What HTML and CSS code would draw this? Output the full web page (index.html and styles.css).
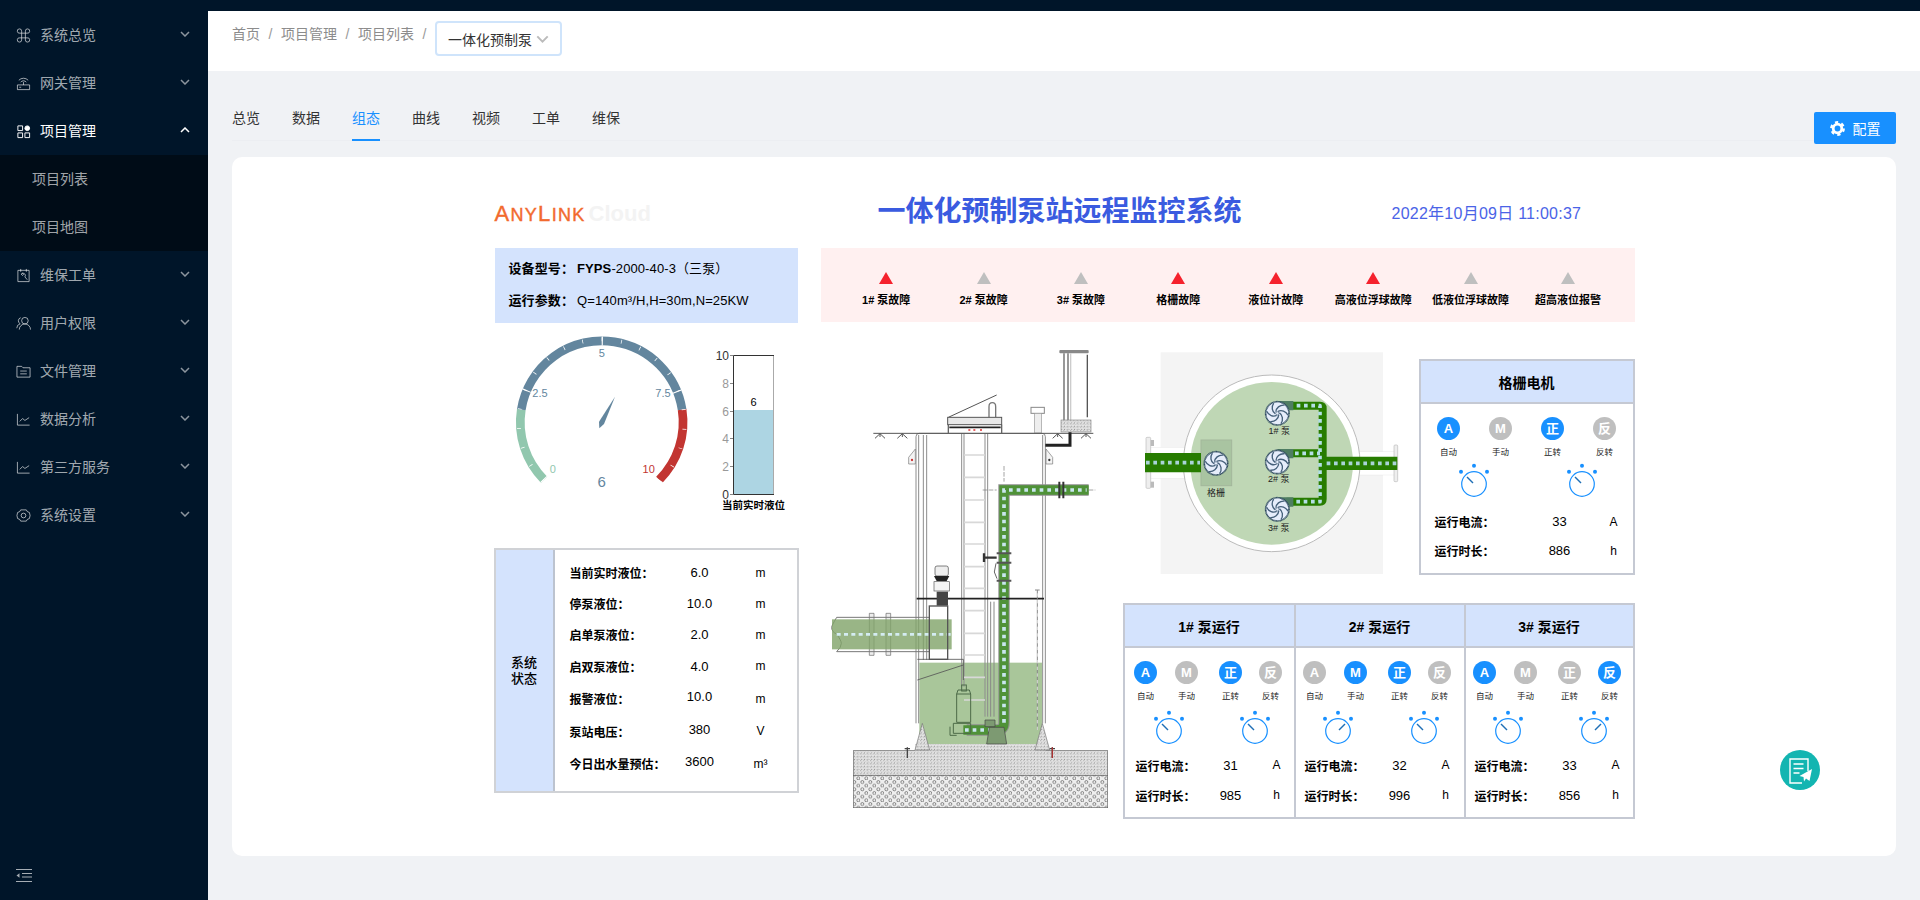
FILE: index.html
```html
<!DOCTYPE html>
<html lang="zh-CN">
<head>
<meta charset="utf-8">
<title>一体化预制泵站远程监控系统</title>
<link rel="stylesheet" href="styles.css">
</head>
<body>
<svg class="defs" width="0" height="0" aria-hidden="true">
  <defs>
    <symbol id="chev" viewBox="0 0 10 6"><path d="M1 1l4 4 4-4" fill="none" stroke="currentColor" stroke-width="1.5"/></symbol>
    <g id="dots">
      <circle cx="-13" cy="-12.3" r="2" fill="#1890ff"/><circle cx="0" cy="-18.3" r="2" fill="#1890ff"/><circle cx="13" cy="-12.3" r="2" fill="#1890ff"/>
      <circle r="12.3" fill="none" stroke="#1890ff" stroke-width="1.2"/>
    </g>
    <symbol id="dial-l" viewBox="-16 -21 32 36"><use href="#dots"/><path d="M-1 -1L-7 -7" stroke="#1f6fb5" stroke-width="1.4"/></symbol>
    <symbol id="dial-r" viewBox="-16 -21 32 36"><use href="#dots"/><path d="M1 -1L7 -7" stroke="#1f6fb5" stroke-width="1.4"/></symbol>
    <g id="fan">
      <circle r="35" fill="#e6edfb" stroke="#2f4a60" stroke-width="5" stroke-dasharray="3 1"/>
      <g fill="none" stroke="#45607a" stroke-width="4">
        <path id="blade" d="M2 -6C12 -11 26 -7 32 6"/>
        <use href="#blade" transform="rotate(60)"/><use href="#blade" transform="rotate(120)"/><use href="#blade" transform="rotate(180)"/><use href="#blade" transform="rotate(240)"/><use href="#blade" transform="rotate(300)"/>
      </g>
      <circle r="5" fill="#e6edfb" stroke="#45607a" stroke-width="2"/>
    </g>
    <pattern id="speck" width="10" height="10" patternUnits="userSpaceOnUse">
      <rect width="10" height="10" fill="#e6e6e6"/>
      <circle cx="2" cy="2" r="1.3" fill="#6a6a6a"/><circle cx="7" cy="4" r="1.100" fill="#888"/><circle cx="4" cy="8" r="1.300" fill="#5a5a5a"/><circle cx="9" cy="9" r=".9" fill="#777"/>
    </pattern>
    <pattern id="rings" width="24" height="22" patternUnits="userSpaceOnUse">
      <rect width="24" height="22" fill="#eee"/>
      <circle cx="7" cy="6" r="4.500" fill="none" stroke="#555" stroke-width="2"/><circle cx="19" cy="17" r="4.500" fill="none" stroke="#555" stroke-width="2"/>
    </pattern>
  </defs>
</svg>

<div class="topstrip"></div>
<div class="app">
  <aside class="side">
    <nav class="menu">
      <a class="mi"><svg class="ic" viewBox="0 0 16 16"><path d="M6 5.500H4.200A2.300 2.300 0 1 1 6 3.300zM10 5.500h1.800A2.300 2.300 0 1 0 10 3.300zM6 10.500H4.200A2.300 2.300 0 1 0 6 12.700zM10 10.500h1.800A2.300 2.300 0 1 1 10 12.700zM6 5.500h4v5H6z"/></svg><span>系统总览</span><svg class="ch"><use href="#chev"/></svg></a>
      <a class="mi"><svg class="ic" viewBox="0 0 16 16"><path d="M1.500 9.500h13v5h-13zM3.500 12h2M5 6.500a4 4 0 0 1 6 0M3 4.500a7 7 0 0 1 10 0M8 6.500v3"/></svg><span>网关管理</span><svg class="ch"><use href="#chev"/></svg></a>
      <a class="mi on"><svg class="ic" viewBox="0 0 16 16"><path d="M2 2h5v5H2zM2 9.500h5v5H2zM9.500 9.500h5v5h-5z"/><circle cx="12" cy="4.500" r="2.500" fill="currentColor"/></svg><span>项目管理</span><svg class="ch up"><use href="#chev"/></svg></a>
      <div class="sub"><a class="si">项目列表</a><a class="si">项目地图</a></div>
      <a class="mi"><svg class="ic" viewBox="0 0 16 16"><path d="M2 2.500h12v12H2zM5 1v3M11 1v3M5.500 6.500a2.500 2.500 0 0 1 4 3l2.500 3M5.500 6.500l1.500 1.500 1-1-1.500-1.500"/></svg><span>维保工单</span><svg class="ch"><use href="#chev"/></svg></a>
      <a class="mi"><svg class="ic" viewBox="0 0 16 16"><circle cx="9.500" cy="5" r="3.500"/><path d="M3.500 14.500a6 6 0 0 1 12 0M5 1.800a3.500 3.500 0 0 0-.5 6.500A5 5 0 0 0 .8 13"/></svg><span>用户权限</span><svg class="ch"><use href="#chev"/></svg></a>
      <a class="mi"><svg class="ic" viewBox="0 0 16 16"><path d="M1 2.500h5l1.500 1.500H15v10H1zM4.500 7.500h7M4.500 10.500h7"/></svg><span>文件管理</span><svg class="ch"><use href="#chev"/></svg></a>
      <a class="mi"><svg class="ic" viewBox="0 0 16 16"><path d="M1.500 2v12h13M4 10l3-3 2.500 2L14 6"/></svg><span>数据分析</span><svg class="ch"><use href="#chev"/></svg></a>
      <a class="mi"><svg class="ic" viewBox="0 0 16 16"><path d="M1.500 2v12h13M4 10l3-3 2.500 2L14 6"/></svg><span>第三方服务</span><svg class="ch"><use href="#chev"/></svg></a>
      <a class="mi"><svg class="ic" viewBox="0 0 16 16"><path d="M5 2h6l1 1.800 2.300 1L15 8l-.7 3.200-2.300 1L11 14H5l-1-1.800-2.300-1L1 8l.7-3.200 2.300-1z" stroke-linejoin="round"/><circle cx="8" cy="8" r="2.500"/></svg><span>系统设置</span><svg class="ch"><use href="#chev"/></svg></a>
    </nav>
    <div class="collapse"><svg class="ic wide" viewBox="0 0 16 13"><path d="M0 .5h16M6 4.500h10M6 8h10M0 12.500h16"/><path d="M3.500 4.200v4.600L.5 6.500z" fill="currentColor" stroke="none"/></svg></div>
  </aside>

  <main class="main">
    <header class="head">
      <div class="crumbs"><span>首页</span><i>/</i><span>项目管理</span><i>/</i><span>项目列表</span><i>/</i></div>
      <div class="select"><span>一体化预制泵</span><svg class="ch sel"><use href="#chev"/></svg></div>
    </header>

    <div class="tabs">
      <a class="tab">总览</a><a class="tab">数据</a><a class="tab act">组态</a><a class="tab">曲线</a><a class="tab">视频</a><a class="tab">工单</a><a class="tab">维保</a>
      <button class="cfg"><svg class="gear" viewBox="0 0 14 14"><circle cx="7" cy="7" r="4" fill="none" stroke="#fff" stroke-width="2.600"/><circle cx="7" cy="7" r="5.800" fill="none" stroke="#fff" stroke-width="2.200" stroke-dasharray="3 3.070"/></svg><span>配置</span></button>
    </div>

    <section class="card">
      <div class="board">
        <div class="top">
          <div class="logo"><span class="any">A<small>NY</small>L<small>INK</small></span><span class="cloud">Cloud</span></div>
          <h1 class="title">一体化预制泵站远程监控系统</h1>
          <div class="date">2022年10月09日 11:00:37</div>
        </div>
        <div class="cols">
          <div class="left">
            <div class="device">
              <p><b>设备型号：</b><b>FYPS</b>-2000-40-3（三泵）</p>
              <p><b>运行参数：</b>Q=140m³/H,H=30m,N=25KW</p>
            </div>
            <div class="charts">
              <svg class="gauge" viewBox="0 0 200 190">
                <g fill="none" stroke-width="8.700" transform="rotate(135 106.700 99.300)">
                  <circle cx="106.700" cy="99.300" r="81.400" pathLength="360" stroke="#91c7ae" stroke-dasharray="54 306"/>
                  <circle cx="106.700" cy="99.300" r="81.400" pathLength="360" stroke="#63869e" stroke-dasharray="162 198" transform="rotate(54 106.700 99.300)"/>
                  <circle cx="106.700" cy="99.300" r="81.400" pathLength="360" stroke="#c23531" stroke-dasharray="54 306" transform="rotate(216 106.700 99.300)"/>
                  <circle cx="106.700" cy="99.300" r="83" pathLength="360" stroke="#fff" stroke-width="4" stroke-dasharray=".5 13"/>
                  <circle cx="106.700" cy="99.300" r="81.400" pathLength="360" stroke="#fff" stroke-width="9" stroke-dasharray=".8 66.700"/>
                </g>
                <polygon points="120,73.700 104,98.700 104.300,105.300 109,101" fill="#63869e"/>
                <g class="glab">
                  <text x="106.700" y="33.500">5</text><text x="45" y="74">2.5</text><text x="168" y="74">7.5</text>
                  <text x="57.700" y="150" class="g0">0</text><text x="153.700" y="150" class="g1">10</text>
                  <text x="106.700" y="164" class="gv">6</text>
                </g>
              </svg>
              <svg class="bar" viewBox="0 0 104 190">
                <rect x="39" y="87" width="39" height="84" fill="#add5e3"/>
                <path d="M78.500 32.500v139" stroke="#aaa" fill="none"/>
                <path d="M79 32.500H38.500V171.500M38.500 171.500H79" stroke="#333" fill="none"/>
                <path d="M35 32.500h3M35 60.500h3M35 88.500h3M35 115.500h3M35 143.500h3M35 171.500h3" stroke="#888"/>
                <g class="blab">
                  <text x="34" y="36.500">10</text><text x="34" y="64.500" class="dim">8</text><text x="34" y="92.500" class="dim">6</text><text x="34" y="119.500" class="dim">4</text><text x="34" y="147.500" class="dim">2</text><text x="34" y="175.500">0</text>
                </g>
                <text x="58.500" y="83" class="bval">6</text>
                <text x="58.500" y="186" class="btitle">当前实时液位</text>
              </svg>
            </div>
            <div class="status">
              <div class="st-head">系统<br>状态</div>
              <div class="st-body">
                <div class="st-row"><b>当前实时液位：</b><span class="v">6.0</span><span class="u">m</span></div>
                <div class="st-row"><b>停泵液位：</b><span class="v">10.0</span><span class="u">m</span></div>
                <div class="st-row"><b>启单泵液位：</b><span class="v">2.0</span><span class="u">m</span></div>
                <div class="st-row"><b>启双泵液位：</b><span class="v">4.0</span><span class="u">m</span></div>
                <div class="st-row"><b>报警液位：</b><span class="v">10.0</span><span class="u">m</span></div>
                <div class="st-row"><b>泵站电压：</b><span class="v">380</span><span class="u">V</span></div>
                <div class="st-row"><b>今日出水量预估：</b><span class="v">3600</span><span class="u">m³</span></div>
              </div>
            </div>
          </div>

          <div class="right">
            <div class="alarms">
              <div class="al"><i class="tri red"></i><span>1# 泵故障</span></div>
              <div class="al"><i class="tri"></i><span>2# 泵故障</span></div>
              <div class="al"><i class="tri"></i><span>3# 泵故障</span></div>
              <div class="al"><i class="tri red"></i><span>格栅故障</span></div>
              <div class="al"><i class="tri red"></i><span>液位计故障</span></div>
              <div class="al"><i class="tri red"></i><span>高液位浮球故障</span></div>
              <div class="al"><i class="tri"></i><span>低液位浮球故障</span></div>
              <div class="al"><i class="tri"></i><span>超高液位报警</span></div>
            </div>
            <div class="scene">
              <svg class="section" viewBox="3 0 906 1440">
                <!-- foundation -->
                <rect x="100" y="1232" width="763" height="74" fill="url(#speck)" stroke="#666" stroke-width="2"/>
                <rect x="100" y="1306" width="763" height="97" fill="url(#rings)" stroke="#666" stroke-width="2"/>
                <rect x="285" y="1212" width="392" height="20" fill="url(#speck)"/>
                <!-- water -->
                <rect x="298" y="968" width="368" height="244" fill="#a9c69a"/>
                <!-- tank -->
                <g fill="none" stroke="#8d8d8d" stroke-width="3">
                  <path d="M288 1150V290q0-10 10-10H666q10 0 10 10V1150"/>
                  <path d="M296 1150V285M668 1150V285"/>
                  <path d="M310 285V960M320 285V960M425 280V1040M432 280V1040M495 280V1130M503 280V1130"/>
                </g>
                <path d="M315 290V960" stroke="#fff" stroke-width="3" stroke-dasharray="6 16"/>
                <path d="M432 345h63M432 412h63M432 480h63M432 547h63M432 612h63M432 680h63M432 745h63M432 812h63M432 880h63M432 945h63M432 1012h63M432 1080h63" stroke="#d8d8d8" stroke-width="5"/>
                <path d="M285 1230l22-80 22 80zM645 1230l22-80 22 80z" fill="url(#speck)" stroke="#777" stroke-width="2"/>
                <!-- ground -->
                <path d="M160 280H820" stroke="#555" stroke-width="3"/>
                <path d="M165 295l15-14 15 14M180 281v10M232 295l15-14 15 14M247 281v10M698 295l15-14 15 14M713 281v10M783 295l15-14 15 14M798 281v10" fill="none" stroke="#555" stroke-width="3"/>
                <!-- lugs -->
                <path d="M266 372V352l20-25v45zM698 372V352l-20-25v45z" fill="#f4f4f4" stroke="#777" stroke-width="2"/>
                <circle cx="276" cy="360" r="3.500" fill="#c33"/><circle cx="688" cy="360" r="3.500" fill="#333"/>
                <!-- hatch -->
                <path d="M385 232L530 165" stroke="#555" stroke-width="3"/>
                <path d="M507 232V200q0-12 10-12t10 12V232" fill="none" stroke="#777" stroke-width="4"/>
                <rect x="383" y="232" width="162" height="22" fill="#e8e8e8" stroke="#555" stroke-width="3"/>
                <path d="M388 262H542" stroke="#222" stroke-width="5"/>
                <path d="M385 254V280M545 254V280" stroke="#666" stroke-width="4"/>
                <path d="M445 270h6M460 270h6M480 270h6" stroke="#d33" stroke-width="4"/>
                <!-- vent -->
                <rect x="633" y="202" width="40" height="18" fill="#fff" stroke="#888" stroke-width="3"/>
                <rect x="643" y="220" width="22" height="58" fill="#eee" stroke="#999" stroke-width="2"/>
                <!-- cabinet -->
                <rect x="718" y="30" width="88" height="10" fill="#888" rx="3"/>
                <path d="M732 40V240M744 40V240" stroke="#666" stroke-width="4"/>
                <path d="M752 40V240" stroke="#ccc" stroke-width="4"/>
                <path d="M802 44V232" stroke="#555" stroke-width="4"/>
                <rect x="723" y="240" width="90" height="36" fill="url(#speck)" stroke="#888" stroke-width="2"/>
                <path d="M676 316H750V277" fill="none" stroke="#222" stroke-width="9"/>
                <!-- outlet pipe -->
                <path d="M552 1000V450H806M440 1170H530q22 0 22-22V1000" fill="none" stroke="#8f8f8f" stroke-width="34"/>
                <path d="M552 1000V450H806M430 1170H530q22 0 22-22V1000" fill="none" stroke="#4f9238" stroke-width="28"/>
                <path d="M552 1148V450H800M435 1170H540" fill="none" stroke="#c9e6ef" stroke-width="11" stroke-dasharray="11 12"/>
                <path d="M718 425V475M730 425V475" stroke="#333" stroke-width="6"/>
                <path d="M488 450H530M806 450H826M552 378V425" stroke="#777" stroke-width="2" stroke-dasharray="14 4"/>
                <path d="M530 640h44M530 668h44M530 722h44" stroke="#555" stroke-width="6"/>
                <path d="M492 640v26M492 653h38" stroke="#333" stroke-width="7"/>
                <path d="M528 670l-5 26 8 20" fill="none" stroke="#666" stroke-width="3"/>
                <!-- beam + rails -->
                <path d="M290 776H672" stroke="#222" stroke-width="5"/>
                <path d="M512 785V1130M522 785V1130M652 750V1170M645 750h14" stroke="#888" stroke-width="3" fill="none"/>
                <path d="M652 760V1170" stroke="#fff" stroke-width="2" stroke-dasharray="10 10"/>
                <!-- inlet -->
                <path d="M148 820h14v126h-14zM198 820h14v126h-14z" fill="#eee" stroke="#666" stroke-width="2"/>
                <path d="M50 832H330M50 935H330" stroke="#777" stroke-width="3"/>
                <path d="M50 832q-15 25-15 30 0 14 15 20 14 20 14 28 0 12-14 25" fill="none" stroke="#777" stroke-width="3"/>
                <rect x="36" y="838" width="359" height="90" fill="#7fa368" opacity=".8"/>
                <path d="M50 883H392" stroke="#d4ecf2" stroke-width="8" stroke-dasharray="12 10"/>
                <!-- upper valve -->
                <rect x="345" y="678" width="40" height="30" rx="6" fill="#eee" stroke="#444" stroke-width="2"/>
                <path d="M342 708l8 15h30l8-15z" fill="#222"/>
                <rect x="342" y="725" width="46" height="28" fill="#f4f4f4" stroke="#555" stroke-width="2"/>
                <rect x="350" y="755" width="34" height="42" fill="#444"/>
                <rect x="328" y="798" width="55" height="160" fill="none" stroke="#555" stroke-width="4"/>
                <path d="M292 958H430V1020M292 1020L430 975" fill="none" stroke="#555" stroke-width="2.500"/>
                <!-- pump -->
                <g fill="none" stroke="#4c6a48" stroke-width="3">
                  <rect x="425" y="1035" width="14" height="18"/>
                  <path d="M410 1062l4-12h34l4 12v85h-42z"/>
                  <path d="M410 1062h42M400 1150h52v30H400zM390 1160v26h20"/>
                </g>
                <path d="M500 1212l8-50h44l8 50zM495 1140h30v20h-30z" fill="#7d9a72" stroke="#444" stroke-width="2"/>
                <path d="M262 1222v32M697 1222v32M254 1226h16M689 1226h16" stroke="#444" stroke-width="4"/>
                <path d="M697 1222v32" stroke="#a33" stroke-width="4"/>
              </svg>

              <div class="scene-side">
                <div class="upper">
                  <svg class="plan" viewBox="0 0 780 720">
                    <rect x="62" y="37" width="667" height="665" fill="#f4f4f4"/>
                    <rect x="30" y="322" width="105" height="93" fill="#fff" stroke="#ddd"/>
                    <rect x="655" y="335" width="110" height="70" fill="#fff" stroke="#ddd"/>
                    <circle cx="395" cy="370" r="265" fill="#fff" stroke="#bbb" stroke-width="3"/>
                    <circle cx="395" cy="370" r="244" fill="#bfd7b5"/>
                    <rect x="18" y="292" width="14" height="153" rx="3" fill="#eee" stroke="#bbb" stroke-width="2"/>
                    <rect x="762" y="315" width="11" height="110" rx="3" fill="#eee" stroke="#bbb" stroke-width="2"/>
                    <rect x="32" y="300" width="10" height="18" fill="#bbb"/><rect x="32" y="425" width="10" height="18" fill="#bbb"/>
                    <rect x="183" y="300" width="92" height="137" fill="#a9c4a1" stroke="#a3b89b" stroke-width="3"/>
                    <g fill="none" stroke-linejoin="round">
                      <path d="M430 197H540q8 0 8 8V477q0 8-8 8H440M440 340H548" stroke="#277c00" stroke-width="24"/>
                      <path d="M15 368H183" stroke="#277c00" stroke-width="58"/>
                      <path d="M548 370H772" stroke="#277c00" stroke-width="40"/>
                      <path d="M470 197H540V485H465M465 340H540" stroke="#b5dfe6" stroke-width="11" stroke-dasharray="11 11"/>
                      <path d="M18 368H180M560 370H772" stroke="#a9d3d8" stroke-width="11" stroke-dasharray="11 11"/>
                    </g>
                    <path d="M412 183h48v28h-48zM412 327h48v28h-48zM412 472h48v28h-48z" fill="#4f7d63"/>
                    <use href="#fan" transform="translate(412 220)"/><use href="#fan" transform="translate(412 366)"/><use href="#fan" transform="translate(412 508)"/><use href="#fan" transform="translate(228 370)"/>
                    <g class="plab">
                      <text x="418" y="282">1# 泵</text><text x="416" y="427">2# 泵</text><text x="416" y="574">3# 泵</text><text x="228" y="468">格栅</text>
                    </g>
                  </svg>

                  <div class="motor">
                    <div class="unit-head">格栅电机</div>
                    <div class="lamps">
                      <div class="lamp"><i class="dot on">A</i><span>自动</span></div>
                      <div class="lamp"><i class="dot">M</i><span>手动</span></div>
                      <div class="lamp"><i class="dot on">正</i><span>正转</span></div>
                      <div class="lamp"><i class="dot">反</i><span>反转</span></div>
                    </div>
                    <div class="dials"><svg class="dial"><use href="#dial-l"/></svg><svg class="dial"><use href="#dial-l"/></svg></div>
                    <div class="data"><b>运行电流：</b><span class="v">33</span><span class="u">A</span></div>
                    <div class="data"><b>运行时长：</b><span class="v">886</span><span class="u">h</span></div>
                  </div>
                </div>

                <div class="pumps">
                  <div class="pump">
                    <div class="unit-head">1# 泵运行</div>
                    <div class="lamps">
                      <div class="lamp"><i class="dot on">A</i><span>自动</span></div>
                      <div class="lamp"><i class="dot">M</i><span>手动</span></div>
                      <div class="lamp"><i class="dot on">正</i><span>正转</span></div>
                      <div class="lamp"><i class="dot">反</i><span>反转</span></div>
                    </div>
                    <div class="dials"><svg class="dial"><use href="#dial-l"/></svg><svg class="dial"><use href="#dial-l"/></svg></div>
                    <div class="data"><b>运行电流：</b><span class="v">31</span><span class="u">A</span></div>
                    <div class="data"><b>运行时长：</b><span class="v">985</span><span class="u">h</span></div>
                  </div>
                  <div class="pump">
                    <div class="unit-head">2# 泵运行</div>
                    <div class="lamps">
                      <div class="lamp"><i class="dot">A</i><span>自动</span></div>
                      <div class="lamp"><i class="dot on">M</i><span>手动</span></div>
                      <div class="lamp"><i class="dot on">正</i><span>正转</span></div>
                      <div class="lamp"><i class="dot">反</i><span>反转</span></div>
                    </div>
                    <div class="dials"><svg class="dial"><use href="#dial-r"/></svg><svg class="dial"><use href="#dial-l"/></svg></div>
                    <div class="data"><b>运行电流：</b><span class="v">32</span><span class="u">A</span></div>
                    <div class="data"><b>运行时长：</b><span class="v">996</span><span class="u">h</span></div>
                  </div>
                  <div class="pump">
                    <div class="unit-head">3# 泵运行</div>
                    <div class="lamps">
                      <div class="lamp"><i class="dot on">A</i><span>自动</span></div>
                      <div class="lamp"><i class="dot">M</i><span>手动</span></div>
                      <div class="lamp"><i class="dot">正</i><span>正转</span></div>
                      <div class="lamp"><i class="dot on">反</i><span>反转</span></div>
                    </div>
                    <div class="dials"><svg class="dial"><use href="#dial-l"/></svg><svg class="dial"><use href="#dial-r"/></svg></div>
                    <div class="data"><b>运行电流：</b><span class="v">33</span><span class="u">A</span></div>
                    <div class="data"><b>运行时长：</b><span class="v">856</span><span class="u">h</span></div>
                  </div>
                </div>
              </div>
            </div>
          </div>
        </div>
      </div>
    </section>
  </main>
</div>

<a class="float"><svg viewBox="0 0 40 40" width="40" height="40"><path d="M28 21V9H10v24h12M13.500 14h10M13.500 18.500h10M13.500 23h6" fill="none" stroke="#fff" stroke-width="1.400"/><path d="M32 19l-2.500 12-3.500-2.500-2 3-.5-4.500-4-1z" fill="#fff"/></svg></a>
</body>
</html>
```

FILE: styles.css
```css
* { box-sizing: border-box; }
html, body { margin: 0; height: 900px; overflow: hidden; }
body {
  background: #f0f2f5;
  color: #000;
  font-family: "Liberation Sans", "Noto Sans CJK SC", sans-serif;
  font-size: 14px;
}
.defs { position: absolute; }
p, h1 { margin: 0; }
i { font-style: normal; }

.topstrip { height: 11px; background: #001529; }
.app { display: flex; height: 889px; }

/* sidebar */
.side { width: 208px; flex: none; background: #001529; display: flex; flex-direction: column; justify-content: space-between; color: rgba(255, 255, 255, .65); }
.mi { display: flex; align-items: center; height: 48px; padding-left: 16px; position: relative; gap: 9px; line-height: 48px; }
.mi.on { color: #fff; }
.ic { width: 15px; height: 15px; fill: none; stroke: currentColor; stroke-width: 1; flex: none; }
.ch { width: 10px; height: 6px; color: rgba(255, 255, 255, .55); }
.mi .ch { position: absolute; left: 180px; top: 20px; }
.mi.on .ch { color: #fff; }
.ch.up { transform: rotate(180deg); }
.sub { background: #000c17; }
.si { display: block; height: 48px; line-height: 48px; padding-left: 32px; }
.collapse { height: 44px; padding: 13px 0 0 16px; }
.ic.wide { width: 16px; height: 13px; }

/* header */
.main { flex: 1; min-width: 0; }
.head { height: 60px; background: #fff; padding: 10px 0 0 24px; display: flex; align-items: flex-start; }
.crumbs { display: flex; line-height: 22px; padding-top: 2px; color: #8c8c8c; font-size: 14px; }
.crumbs i { width: 21px; text-align: center; color: #999; }
.select { width: 127px; height: 35px; border: 2px solid #cfe4fb; border-radius: 4px; padding-left: 11px; display: flex; align-items: center; gap: 4px; color: #333; font-size: 14px; }
.ch.sel { width: 13px; height: 8px; color: #bbb; }
.ch.sel use { stroke-width: 1; }

/* tabs */
.tabs { margin: 0 24px; height: 70px; padding-top: 36px; display: flex; gap: 32px; align-items: flex-start; border-bottom: 1px solid #eceef2; position: relative; }
.tab { width: 28px; height: 34px; line-height: 22px; color: #333; font-size: 14px; white-space: nowrap; }
.tab.act { color: #1890ff; border-bottom: 2px solid #1890ff; height: 34px; }
.cfg { margin-left: auto; margin-top: 5px; width: 82px; height: 32px; border: 0; border-radius: 2px; background: #1890ff; color: #fff; font: inherit; display: flex; align-items: center; justify-content: center; gap: 8px; padding: 0; }
.gear { width: 15px; height: 15px; }

/* card */
.card { margin: 16px 24px 0; height: 699px; background: #fff; border-radius: 10px; }
.board { width: 1141px; margin: 0 auto; }
.top { height: 91px; display: flex; align-items: center; padding: 19px 0 0 1px; }
.logo { width: 383px; padding-top: 5px; display: flex; gap: 3px; align-items: baseline; font-size: 22px; line-height: 30px; }
.any { color: #f26a2e; letter-spacing: 1.300px; -webkit-text-stroke: .4px #f26a2e; }
.any small { font-size: 18px; }
.cloud { color: #f3f3f3; font-weight: 700; }
.title { width: 514px; font-size: 28px; font-weight: 700; color: #3a5be0; line-height: 36px; }
.date { font-size: 16px; letter-spacing: .25px; color: #4a63e7; }

.cols { display: grid; grid-template-columns: 305px 814px; gap: 22px; }

/* left */
.device { margin-left: 1px; width: 303px; height: 75px; background: #d4e3fd; padding: 5px 0 0 14px; font-size: 13px; line-height: 32px; letter-spacing: .1px; }
.device b { font-weight: 700; }
.device b:first-child { margin-right: 3px; }
.charts { height: 225px; display: flex; }
.gauge { margin-left: 1px; width: 200px; height: 190px; flex: none; }
.glab text { font-size: 11px; fill: #63869e; text-anchor: middle; }
.glab .g0 { fill: #91c7ae; }
.glab .g1 { fill: #c23531; }
.glab .gv { font-size: 15px; }
.bar { width: 104px; height: 190px; flex: none; }
.blab text { font-size: 12px; text-anchor: end; fill: #333; }
.blab .dim { fill: #999; }
.bval { font-size: 11px; text-anchor: middle; }
.btitle { font-size: 10.500px; font-weight: 700; text-anchor: middle; }

.status { height: 245px; display: flex; border: 2px solid #d0d2d6; }
.st-head { width: 59px; background: #d4e3fd; border-right: 2px solid #bcc3cf; display: flex; align-items: center; justify-content: center; text-align: center; font-size: 13px; font-weight: 500; line-height: 16px; }
.st-body { flex: 1; padding-top: 7px; display: grid; grid-template-rows: 31px 31px 31px 32px 33px 32px 33px; align-content: start; }
.st-row { display: grid; grid-template-columns: 100px 60px 62px; padding-left: 15px; align-items: center; font-size: 12px; }
.st-row:nth-child(n+5) .v { margin-top: -4px; }
.st-row b, .data b { font-weight: 700; white-space: nowrap; }
.v { font-size: 13px; text-align: center; }
.u { font-size: 12px; text-align: center; }

/* alarms */
.alarms { height: 74px; background: #fff0f0; padding: 24px 17px 0; display: grid; grid-template-columns: repeat(8, 97.400px); }
.al { display: flex; flex-direction: column; align-items: center; }
.al span { font-size: 11px; font-weight: 700; line-height: 14px; white-space: nowrap; }
.tri { width: 0; height: 0; border-left: 7px solid transparent; border-right: 7px solid transparent; border-bottom: 12px solid #bfbfbf; margin-bottom: 9px; }
.tri.red { border-bottom-color: #f5222d; }

/* scene */
.scene { display: flex; margin-top: 18px; align-items: flex-start; }
.section { width: 302px; height: 480px; flex: none; }
.scene-side { flex: 1; min-width: 0; }
.upper { display: flex; align-items: flex-start; padding-left: 17px; gap: 19px; height: 240px; }
.plan { width: 260px; height: 240px; flex: none; }
.plab text { font-size: 27px; text-anchor: middle; fill: #222; }

.motor { margin-top: 19px; width: 216px; height: 216px; border: 2px solid #c5c9d3; flex: none; }
.unit-head { height: 43px; background: #d4e3fd; border-bottom: 2px solid #c5c9d3; display: flex; align-items: center; justify-content: center; font-size: 14px; font-weight: 700; }
.lamps { display: grid; justify-items: center; }
.lamp { display: flex; flex-direction: column; align-items: center; }
.dot { width: 23px; height: 23px; border-radius: 50%; background: #bfbfbf; color: #fff; font-size: 13px; font-weight: 700; line-height: 23px; text-align: center; }
.dot.on { background: #1890ff; }
.lamp span { margin-top: 5px; font-size: 8.500px; line-height: 14px; color: #222; white-space: nowrap; }
.dials { display: flex; }
.dial { width: 32px; height: 36px; flex: none; }
.data { display: grid; align-items: center; font-size: 12px; }

.motor .lamps { padding: 13px 0 0 2px; grid-template-columns: repeat(4, 52px); }
.motor .dials { margin-top: 4px; padding-left: 37px; gap: 76px; }
.motor .data { height: 29px; padding-left: 14px; grid-template-columns: 80px 90px 18px; }
.motor .dials + .data { margin-top: 8px; }

.pumps { margin-top: 23px; height: 216px; border: 2px solid #c5c9d3; display: grid; grid-template-columns: 169px 170px 169px; }
.pump { border-left: 2px solid #c5c9d3; min-width: 0; }
.pump:first-child { border-left: 0; }
.pump .lamps { padding-top: 13px; grid-template-columns: 38px 44px 44px 36px; }
.pump:first-child .lamps { padding-left: 2px; }
.pump .dials { margin-top: 7px; padding-left: 26px; gap: 54px; }
.pump:first-child .dials { padding-left: 28px; }
.pump .data { height: 30px; padding-left: 9px; grid-template-columns: 70px 50px 42px; }
.pump:first-child .data { padding-left: 11px; }
.pump .dials + .data { margin-top: 4px; }

.float { position: fixed; left: 1780px; top: 750px; width: 40px; height: 40px; border-radius: 50%; background: #13b5b1; }
.float svg { display: block; }
```
